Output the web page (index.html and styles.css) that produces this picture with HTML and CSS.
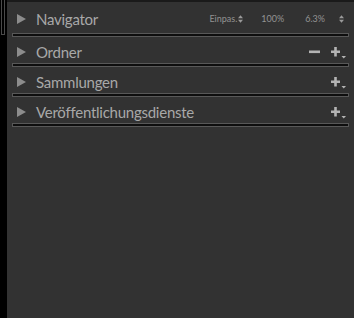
FILE: index.html
```html
<!DOCTYPE html>
<html lang="de">
<head>
    <meta charset="UTF-8">
    <title>Bibliothek</title>
    <link rel="stylesheet" href="styles.css">
</head>
<body>
    <div class="app">
        <div class="strip">
            <div class="scroll"></div>
        </div>
        <div class="panels">
            <section class="panel">
                <div class="head head-nav">
                    <span class="tri"></span>
                    <span class="title">Navigator</span>
                    <div class="zoom">
                        <span class="z z-fit">Einpas.<svg class="updown" width="5" height="8" viewBox="0 0 5 8"><path d="M0 3.2 L2.5 0.2 L5 3.2 Z M0 4.8 L2.5 7.8 L5 4.8 Z" fill="#9a9a9a"/></svg></span>
                        <span class="z z-100">100%</span>
                        <span class="z z-63">6.3%</span>
                        <svg class="updown" width="5" height="8" viewBox="0 0 5 8"><path d="M0 3.2 L2.5 0.2 L5 3.2 Z M0 4.8 L2.5 7.8 L5 4.8 Z" fill="#9a9a9a"/></svg>
                    </div>
                </div>
                <div class="rule"></div>
            </section>
            <section class="panel">
                <div class="head">
                    <span class="tri"></span>
                    <span class="title">Ordner</span>
                    <div class="tools">
                        <svg class="minus" width="11" height="4" viewBox="0 0 11 4"><rect x="0" y="0.5" width="11" height="2.6" fill="#b4b4b4"/></svg>
                        <svg class="plus" width="15" height="12" viewBox="0 0 15 12"><path d="M4.5 0 V9.5 M0 4.8 H9" stroke="#b4b4b4" stroke-width="2.6"/><path d="M10.5 9 H15 L12.75 11.5 Z" fill="#b4b4b4"/></svg>
                    </div>
                </div>
                <div class="rule"></div>
            </section>
            <section class="panel">
                <div class="head">
                    <span class="tri"></span>
                    <span class="title">Sammlungen</span>
                    <div class="tools">
                        <svg class="plus" width="15" height="12" viewBox="0 0 15 12"><path d="M4.5 0 V9.5 M0 4.8 H9" stroke="#b4b4b4" stroke-width="2.6"/><path d="M10.5 9 H15 L12.75 11.5 Z" fill="#b4b4b4"/></svg>
                    </div>
                </div>
                <div class="rule"></div>
            </section>
            <section class="panel">
                <div class="head">
                    <span class="tri"></span>
                    <span class="title">Veröffentlichungsdienste</span>
                    <div class="tools">
                        <svg class="plus" width="15" height="12" viewBox="0 0 15 12"><path d="M4.5 0 V9.5 M0 4.8 H9" stroke="#b4b4b4" stroke-width="2.6"/><path d="M10.5 9 H15 L12.75 11.5 Z" fill="#b4b4b4"/></svg>
                    </div>
                </div>
                <div class="rule"></div>
            </section>
        </div>
    </div>
</body>
</html>
```

FILE: styles.css
```css
* {
    padding: 0px;
    margin: 0px;
    box-sizing: border-box;
}
html, body {
    width: 100%;
    height: 100%;
    background-color: #000;
}

.app {
    display: flex;
    width: 354px;
    height: 318px;
    font-family: Lato, "Noto Sans", sans-serif;
}

.strip {
    width: 7px;
    background-color: #000;
    padding: 0px 2px 0px 1px;
}
.scroll {
    height: 35px;
    border: 1px solid #4a4a4a;
    border-top: none;
}

.panels {
    flex: 1;
    background-color: #323232;
    border-top: 2px solid #1a1a1a;
}

.head {
    display: flex;
    align-items: center;
    height: 26px;
    padding: 3px 0px 0px 10px;
}
.head-nav {
    height: 31px;
    padding-top: 2px;
}

.tri {
    width: 0px;
    height: 0px;
    border-left: 9px solid #8c8c8c;
    border-top: 5px solid transparent;
    border-bottom: 5px solid transparent;
    margin-right: 10px;
}

.title {
    color: #a8a8a8;
    font-size: 15px;
    letter-spacing: -0.25px;
}

.rule {
    height: 4px;
    margin: 0px 5px;
    border: 1px solid #585858;
    background-color: #0e0e0e;
}

.zoom {
    margin-left: auto;
    display: flex;
    align-items: center;
    color: #929292;
    font-size: 9px;
    padding-right: 10px;
}
.z-fit {
    display: flex;
    align-items: center;
    gap: 1px;
}
.z-100 {
    margin-left: 18px;
}
.z-63 {
    margin-left: 21px;
    margin-right: 14px;
}

.tools {
    margin-left: auto;
    display: flex;
    align-items: center;
    gap: 11px;
    padding-right: 8px;
}
.plus {
    margin-top: 3px;
}
```
